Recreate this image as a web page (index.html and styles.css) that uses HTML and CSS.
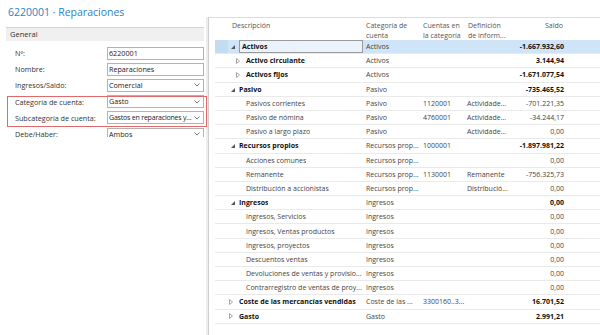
FILE: index.html
```html
<!DOCTYPE html>
<html lang="es">
<head>
<meta charset="utf-8">
<title>6220001 · Reparaciones</title>
<link rel="stylesheet" href="styles.css">
</head>
<body>
<div class="page">
  <section class="card">
    <h1 class="title">6220001 · Reparaciones</h1>
    <div class="fasttab">
      <div class="tab-head">General</div>
      <div class="fields">
        <div class="field"><span class="lbl">Nº:</span><span class="ctl">6220001</span></div>
        <div class="field"><span class="lbl">Nombre:</span><span class="ctl">Reparaciones</span></div>
        <div class="field"><span class="lbl">Ingresos/Saldo:</span><span class="ctl sel"><span class="val">Comercial</span><svg class="chev" width="6" height="4" viewBox="0 0 6 4"><path d="M.5.5 3 3 5.5.5" fill="none" stroke="#7a7a7a"/></svg></span></div>
        <div class="marked">
          <div class="field"><span class="lbl">Categoría de cuenta:</span><span class="ctl sel"><span class="val">Gasto</span><svg class="chev" width="6" height="4" viewBox="0 0 6 4"><path d="M.5.5 3 3 5.5.5" fill="none" stroke="#7a7a7a"/></svg></span></div>
          <div class="field"><span class="lbl">Subcategoría de cuenta:</span><span class="ctl sel"><span class="val tight">Gastos en reparaciones y...</span><svg class="chev" width="6" height="4" viewBox="0 0 6 4"><path d="M.5.5 3 3 5.5.5" fill="none" stroke="#7a7a7a"/></svg></span></div>
        </div>
        <div class="field"><span class="lbl">Debe/Haber:</span><span class="ctl sel"><span class="val">Ambos</span><svg class="chev" width="6" height="4" viewBox="0 0 6 4"><path d="M.5.5 3 3 5.5.5" fill="none" stroke="#7a7a7a"/></svg></span></div>
      </div>
    </div>
  </section>

  <section class="tree">
    <div class="thead">
      <div></div>
      <div class="th desc-h">Descripción</div>
      <div class="th">Categoría de<br>cuenta</div>
      <div class="th">Cuentas en<br>la categoría</div>
      <div class="th">Definición<br>de inform...</div>
      <div class="th num">Saldo</div>
    </div>

    <div class="row selected bold">
      <div class="rs"></div>
      <div class="desc"><span class="tw"><svg class="exp" width="4" height="4" viewBox="0 0 4 4"><path d="M4 0V4H0Z" fill="#555"/></svg></span><span class="txt focus">Activos</span></div>
      <div class="cat">Activos</div><div class="acc"></div><div class="def"></div><div class="num">-1.667.932,60</div>
    </div>
    <div class="row bold">
      <div class="rs"></div>
      <div class="desc l1"><span class="tw"><svg class="col" width="4" height="6" viewBox="0 0 4 6"><path d="M.5.5 3.5 3 .5 5.5Z" fill="none" stroke="#a6a6a6"/></svg></span><span class="txt">Activo circulante</span></div>
      <div class="cat">Activos</div><div class="acc"></div><div class="def"></div><div class="num">3.144,94</div>
    </div>
    <div class="row bold">
      <div class="rs"></div>
      <div class="desc l1"><span class="tw"><svg class="col" width="4" height="6" viewBox="0 0 4 6"><path d="M.5.5 3.5 3 .5 5.5Z" fill="none" stroke="#a6a6a6"/></svg></span><span class="txt">Activos fijos</span></div>
      <div class="cat">Activos</div><div class="acc"></div><div class="def"></div><div class="num">-1.671.077,54</div>
    </div>
    <div class="row bold">
      <div class="rs"></div>
      <div class="desc"><span class="tw"><svg class="exp" width="4" height="4" viewBox="0 0 4 4"><path d="M4 0V4H0Z" fill="#555"/></svg></span><span class="txt">Pasivo</span></div>
      <div class="cat">Pasivo</div><div class="acc"></div><div class="def"></div><div class="num">-735.465,52</div>
    </div>
    <div class="row">
      <div class="rs"></div>
      <div class="desc l1"><span class="tw"></span><span class="txt">Pasivos corrientes</span></div>
      <div class="cat">Pasivo</div><div class="acc">1120001</div><div class="def">Actividade...</div><div class="num">-701.221,35</div>
    </div>
    <div class="row">
      <div class="rs"></div>
      <div class="desc l1"><span class="tw"></span><span class="txt">Pasivo de nómina</span></div>
      <div class="cat">Pasivo</div><div class="acc">4760001</div><div class="def">Actividade...</div><div class="num">-34.244,17</div>
    </div>
    <div class="row">
      <div class="rs"></div>
      <div class="desc l1"><span class="tw"></span><span class="txt">Pasivo a largo plazo</span></div>
      <div class="cat">Pasivo</div><div class="acc"></div><div class="def">Actividade...</div><div class="num">0,00</div>
    </div>
    <div class="row bold">
      <div class="rs"></div>
      <div class="desc"><span class="tw"><svg class="exp" width="4" height="4" viewBox="0 0 4 4"><path d="M4 0V4H0Z" fill="#555"/></svg></span><span class="txt">Recursos propios</span></div>
      <div class="cat">Recursos prop...</div><div class="acc">1000001</div><div class="def"></div><div class="num">-1.897.981,22</div>
    </div>
    <div class="row">
      <div class="rs"></div>
      <div class="desc l1"><span class="tw"></span><span class="txt">Acciones comunes</span></div>
      <div class="cat">Recursos prop...</div><div class="acc"></div><div class="def"></div><div class="num">0,00</div>
    </div>
    <div class="row">
      <div class="rs"></div>
      <div class="desc l1"><span class="tw"></span><span class="txt">Remanente</span></div>
      <div class="cat">Recursos prop...</div><div class="acc">1130001</div><div class="def">Remanente</div><div class="num">-756.325,73</div>
    </div>
    <div class="row">
      <div class="rs"></div>
      <div class="desc l1"><span class="tw"></span><span class="txt">Distribución a accionistas</span></div>
      <div class="cat">Recursos prop...</div><div class="acc"></div><div class="def">Distribució...</div><div class="num">0,00</div>
    </div>
    <div class="row bold">
      <div class="rs"></div>
      <div class="desc"><span class="tw"><svg class="exp" width="4" height="4" viewBox="0 0 4 4"><path d="M4 0V4H0Z" fill="#555"/></svg></span><span class="txt">Ingresos</span></div>
      <div class="cat">Ingresos</div><div class="acc"></div><div class="def"></div><div class="num">0,00</div>
    </div>
    <div class="row">
      <div class="rs"></div>
      <div class="desc l1"><span class="tw"></span><span class="txt">Ingresos, Servicios</span></div>
      <div class="cat">Ingresos</div><div class="acc"></div><div class="def"></div><div class="num">0,00</div>
    </div>
    <div class="row">
      <div class="rs"></div>
      <div class="desc l1"><span class="tw"></span><span class="txt">Ingresos, Ventas productos</span></div>
      <div class="cat">Ingresos</div><div class="acc"></div><div class="def"></div><div class="num">0,00</div>
    </div>
    <div class="row">
      <div class="rs"></div>
      <div class="desc l1"><span class="tw"></span><span class="txt">Ingresos, proyectos</span></div>
      <div class="cat">Ingresos</div><div class="acc"></div><div class="def"></div><div class="num">0,00</div>
    </div>
    <div class="row">
      <div class="rs"></div>
      <div class="desc l1"><span class="tw"></span><span class="txt">Descuentos ventas</span></div>
      <div class="cat">Ingresos</div><div class="acc"></div><div class="def"></div><div class="num">0,00</div>
    </div>
    <div class="row">
      <div class="rs"></div>
      <div class="desc l1"><span class="tw"></span><span class="txt">Devoluciones de ventas y provisio...</span></div>
      <div class="cat">Ingresos</div><div class="acc"></div><div class="def"></div><div class="num">0,00</div>
    </div>
    <div class="row">
      <div class="rs"></div>
      <div class="desc l1"><span class="tw"></span><span class="txt">Contrarregistro de ventas de proy...</span></div>
      <div class="cat">Ingresos</div><div class="acc"></div><div class="def"></div><div class="num">0,00</div>
    </div>
    <div class="row bold">
      <div class="rs"></div>
      <div class="desc"><span class="tw"><svg class="col" width="4" height="6" viewBox="0 0 4 6"><path d="M.5.5 3.5 3 .5 5.5Z" fill="none" stroke="#a6a6a6"/></svg></span><span class="txt">Coste de las mercancías vendidas</span></div>
      <div class="cat">Coste de las ...</div><div class="acc">3300160..3...</div><div class="def"></div><div class="num">16.701,52</div>
    </div>
    <div class="row bold">
      <div class="rs"></div>
      <div class="desc"><span class="tw"><svg class="col" width="4" height="6" viewBox="0 0 4 6"><path d="M.5.5 3.5 3 .5 5.5Z" fill="none" stroke="#a6a6a6"/></svg></span><span class="txt">Gasto</span></div>
      <div class="cat">Gasto</div><div class="acc"></div><div class="def"></div><div class="num">2.991,21</div>
    </div>
  </section>
</div>
</body>
</html>
```

FILE: styles.css
```css
* { box-sizing: border-box; margin: 0; padding: 0; }
html, body { width: 600px; height: 335px; overflow: hidden; background: #fff; }
body {
  font-family: "Open Sans", "Noto Sans", sans-serif;
  font-size: 7px;
  color: #333;
}
.page { display: flex; height: 335px; }

/* left card */
.card {
  width: 206px;
  flex: none;
  height: 137px;
  overflow-x: visible;
  overflow-y: clip;
  position: relative;
  z-index: 1;
}
.title {
  font-weight: 400;
  font-size: 10.5px;
  line-height: 14px;
  color: #2f7fc3;
  padding: 5px 0 0 8px;
  height: 27px;
  white-space: nowrap;
}
.fasttab { margin: 0 2px 0 6px; border-top: 1px solid #d4d4d4; }
.tab-head {
  background: #f0f0f0;
  height: 13px;
  line-height: 12px;
  padding-left: 4px;
  font-size: 7.5px;
  color: #333;
}
.fields { padding: 4px 0 0 9px; }
.field { display: flex; align-items: center; height: 16.2px; }
.lbl { width: 92px; flex: none; font-size: 7.2px; color: #333; white-space: nowrap; }
.ctl {
  width: 97px;
  flex: none;
  height: 13px;
  border: 1px solid #b3b3b3;
  background: #fff;
  padding-left: 1px;
  font-size: 7.2px;
  line-height: 11px;
  color: #222;
  white-space: nowrap;
  display: flex;
  align-items: center;
}
.ctl .val { flex: 1; overflow: hidden; }
.ctl .val.tight { font-size: 7px; letter-spacing: -0.2px; }
.ctl .chev { flex: none; margin: 0 3px 0 1px; }
.marked { position: relative; }
.marked::after {
  content: "";
  position: absolute;
  left: -8px;
  right: -3px;
  top: 2px;
  bottom: -1px;
  border: 1px solid #e06a6a;
  pointer-events: none;
}

/* right tree grid */
.tree {
  flex: 1;
  margin: 17px 0 0 2px;
  border-top: 1px solid #dcdcdc;
  border-left: 1px solid #cdcdcd;
  box-shadow: -2px 0 0 #ededed;
  padding-left: 6px;
}
.thead, .row {
  display: grid;
  grid-template-columns: 13px 135px 57px 45px 45px 56px 1fr;
}
.thead { height: 22px; padding-top: 3px; color: #555; }
.th { line-height: 10px; white-space: nowrap; padding-left: 3px; }
.th.desc-h { padding-left: 4px; }
.th.num { text-align: right; padding-right: 3px; }

.row {
  height: 14.2px;
  border-bottom: 1px solid #eaeaea;
  align-items: center;
  color: #444;
  white-space: nowrap;
}
.row > div { overflow: hidden; }
.row.selected { background: #cfe4f6; }
.row.selected .rs { background: #c2dcf2; align-self: stretch; }
.desc { display: flex; align-items: center; }
.desc.l1 { padding-left: 7px; }
.tw { width: 11px; flex: none; display: flex; align-items: center; }
.tw .exp { margin: 1px 0 0 3px; }
.tw .col { margin-left: 1px; }
.txt { overflow: hidden; }
.txt.focus {
  flex: 1;
  border: 1px solid #9a9a9a;
  background: #eaf3fb;
  padding-left: 2px;
  height: 13px;
  line-height: 11px;
}
.cat { padding-left: 3px; }
.acc { padding-left: 3px; }
.def { padding-left: 2px; }
.num { text-align: right; padding-right: 2px; }
.row.bold .txt, .row.bold .num { font-weight: 700; color: #111; }
```
